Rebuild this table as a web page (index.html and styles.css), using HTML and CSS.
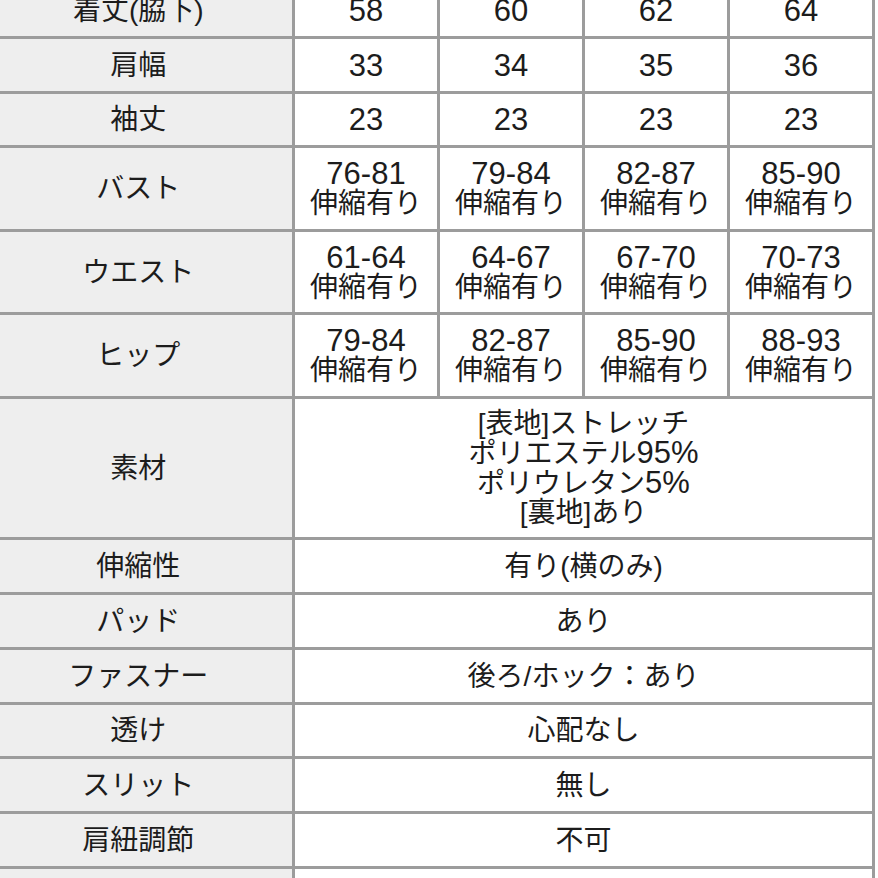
FILE: index.html
```html
<!DOCTYPE html>
<html lang="ja">
<head>
<meta charset="utf-8">
<title>サイズ表</title>
<link rel="stylesheet" href="styles.css">
</head>
<body>
<table class="size-table">
  <colgroup>
    <col class="col-label">
    <col class="col-size">
    <col class="col-size">
    <col class="col-size">
    <col class="col-size">
  </colgroup>
  <tbody>
    <tr class="row-a">
      <th>着丈(脇下)</th>
      <td class="num">58</td><td class="num">60</td><td class="num">62</td><td class="num">64</td>
    </tr>
    <tr class="row-a">
      <th>肩幅</th>
      <td class="num">33</td><td class="num">34</td><td class="num">35</td><td class="num">36</td>
    </tr>
    <tr class="row-b">
      <th>袖丈</th>
      <td class="num">23</td><td class="num">23</td><td class="num">23</td><td class="num">23</td>
    </tr>
    <tr class="row-tall">
      <th>バスト</th>
      <td><span class="num">76-81</span><br>伸縮有り</td>
      <td><span class="num">79-84</span><br>伸縮有り</td>
      <td><span class="num">82-87</span><br>伸縮有り</td>
      <td><span class="num">85-90</span><br>伸縮有り</td>
    </tr>
    <tr class="row-tall2">
      <th>ウエスト</th>
      <td><span class="num">61-64</span><br>伸縮有り</td>
      <td><span class="num">64-67</span><br>伸縮有り</td>
      <td><span class="num">67-70</span><br>伸縮有り</td>
      <td><span class="num">70-73</span><br>伸縮有り</td>
    </tr>
    <tr class="row-tall">
      <th>ヒップ</th>
      <td><span class="num">79-84</span><br>伸縮有り</td>
      <td><span class="num">82-87</span><br>伸縮有り</td>
      <td><span class="num">85-90</span><br>伸縮有り</td>
      <td><span class="num">88-93</span><br>伸縮有り</td>
    </tr>
    <tr class="row-material">
      <th>素材</th>
      <td colspan="4">[表地]ストレッチ<br>ポリエステル<span class="num">95%</span><br>ポリウレタン<span class="num">5%</span><br>[裏地]あり</td>
    </tr>
    <tr class="row-a">
      <th>伸縮性</th>
      <td colspan="4">有り(横のみ)</td>
    </tr>
    <tr class="row-a">
      <th>パッド</th>
      <td colspan="4">あり</td>
    </tr>
    <tr class="row-a">
      <th>ファスナー</th>
      <td colspan="4">後ろ/ホック：あり</td>
    </tr>
    <tr class="row-b">
      <th>透け</th>
      <td colspan="4">心配なし</td>
    </tr>
    <tr class="row-a">
      <th>スリット</th>
      <td colspan="4">無し</td>
    </tr>
    <tr class="row-a">
      <th>肩紐調節</th>
      <td colspan="4">不可</td>
    </tr>
    <tr class="row-a">
      <th>洗濯</th>
      <td colspan="4">手洗い可能（ネット使用・陰干し推奨）</td>
    </tr>
  </tbody>
</table>
</body>
</html>
```

FILE: styles.css
```css
html, body {
  margin: 0;
  padding: 0;
  background: #ffffff;
  overflow: hidden;
  height: 100%;
}

body {
  font-family: "Liberation Sans", "Noto Sans CJK JP", sans-serif;
  color: #1c1c1c;
}

.size-table {
  border-collapse: collapse;
  table-layout: fixed;
  width: 893.5px;
  margin: -19px 0 0 -18.5px;
}

.col-label {
  width: 310.5px;
}

.col-size {
  width: 145px;
}

.size-table th,
.size-table td {
  border: 3px solid #9c9c9c;
  padding: 0;
  text-align: center;
  vertical-align: middle;
  font-size: 28px;
  line-height: 29px;
  font-weight: normal;
  white-space: nowrap;
}

.size-table th {
  background: #eeeeee;
}

.size-table td {
  background: #ffffff;
}

.size-table .num {
  font-size: 31px;
}

.row-a {
  height: 55px;
}

.row-b {
  height: 54px;
}

.row-tall {
  height: 84px;
}

.row-tall2 {
  height: 83px;
}

.row-material {
  height: 141px;
}
```
